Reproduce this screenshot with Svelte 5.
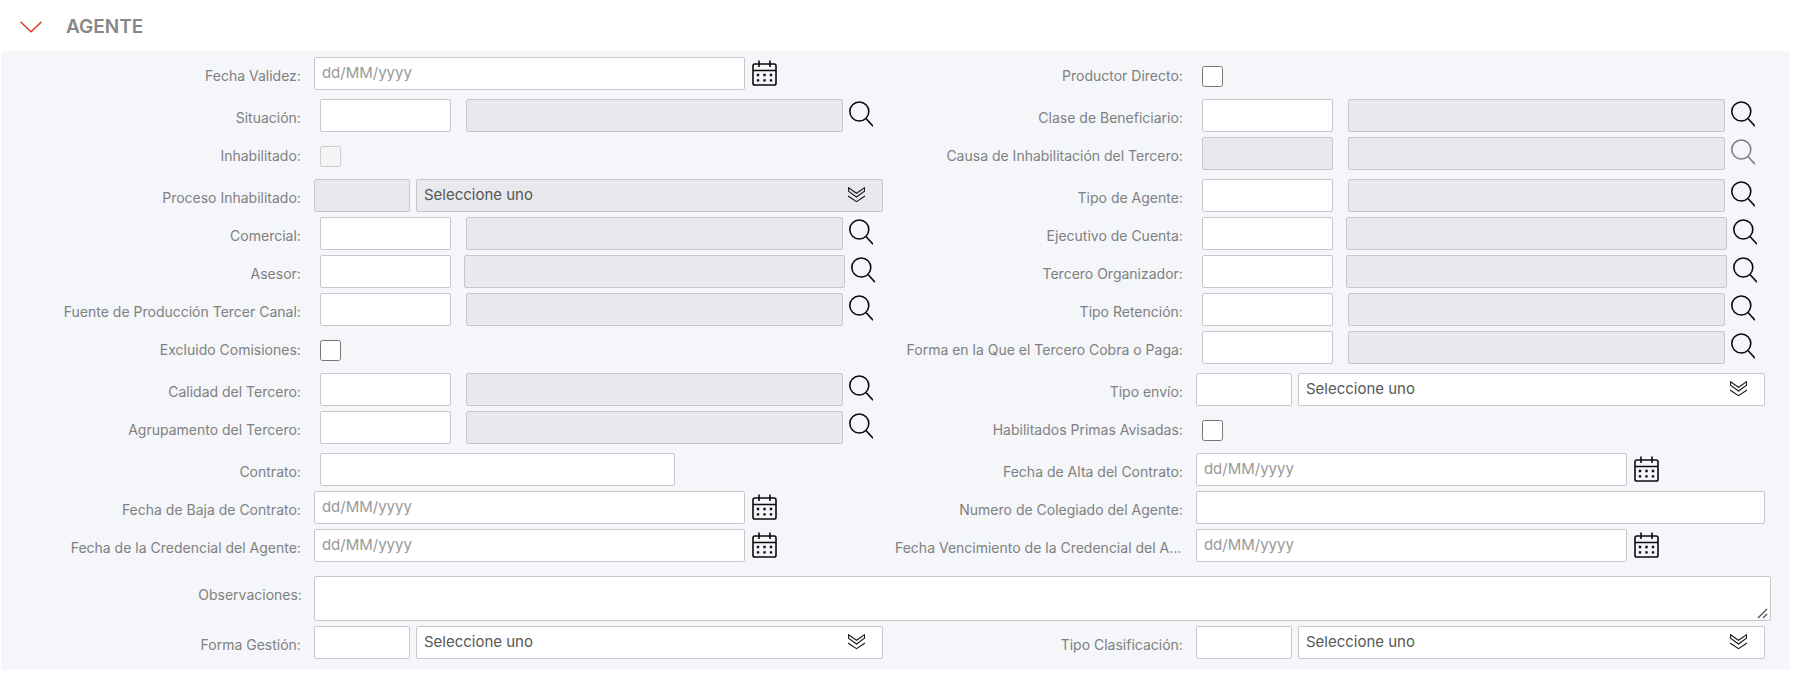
<script>
  const rows = [
    { left: { label: 'Fecha Validez:', kind: 'date' }, right: { label: 'Productor Directo:', kind: 'check' } },
    { spaced: true, left: { label: 'Situación:', kind: 'lookup' }, right: { label: 'Clase de Beneficiario:', kind: 'lookup' } },
    { left: { label: 'Inhabilitado:', kind: 'check', disabled: true }, right: { label: 'Causa de Inhabilitación del Tercero:', kind: 'lookup', disabled: true } },
    { spaced: true, left: { label: 'Proceso Inhabilitado:', kind: 'select', disabled: true }, right: { label: 'Tipo de Agente:', kind: 'lookup' } },
    { left: { label: 'Comercial:', kind: 'lookup' }, right: { label: 'Ejecutivo de Cuenta:', kind: 'lookup', wide: true } },
    { left: { label: 'Asesor:', kind: 'lookup', wide: true }, right: { label: 'Tercero Organizador:', kind: 'lookup', wide: true } },
    { left: { label: 'Fuente de Producción Tercer Canal:', kind: 'lookup' }, right: { label: 'Tipo Retención:', kind: 'lookup' } },
    { left: { label: 'Excluido Comisiones:', kind: 'check' }, right: { label: 'Forma en la Que el Tercero Cobra o Paga:', kind: 'lookup' } },
    { spaced: true, left: { label: 'Calidad del Tercero:', kind: 'lookup' }, right: { label: 'Tipo envío:', kind: 'select' } },
    { left: { label: 'Agrupamento del Tercero:', kind: 'lookup' }, right: { label: 'Habilitados Primas Avisadas:', kind: 'check' } },
    { spaced: true, left: { label: 'Contrato:', kind: 'short' }, right: { label: 'Fecha de Alta del Contrato:', kind: 'date' } },
    { left: { label: 'Fecha de Baja de Contrato:', kind: 'date' }, right: { label: 'Numero de Colegiado del Agente:', kind: 'text' } },
    { left: { label: 'Fecha de la Credencial del Agente:', kind: 'date' }, right: { label: 'Fecha Vencimiento de la Credencial del Agente:', kind: 'date' } }
  ];
  const lastRow = { left: { label: 'Forma Gestión:', kind: 'select' }, right: { label: 'Tipo Clasificación:', kind: 'select' } };

  let open = $state(true);
</script>

{#snippet field(f, id)}
  <div class="field">
    <label for={id}>{f.label}</label>
    {#if f.kind === 'date'}
      <div class="date">
        <input {id} type="text" placeholder="dd/MM/yyyy" />
        <button type="button" class="icon" aria-label="Abrir calendario">
          <svg width="25" height="26" viewBox="0 0 25 26" fill="none" stroke="#0a0a0a" stroke-width="1.6">
            <rect x="1" y="4" width="23" height="21" rx="1.8" />
            <path d="M1 10.5H24M7 0.5V7M18 0.5V7" />
            <path d="M4.8 15h2.4M11.3 15h2.4M17.8 15h2.4M4.8 20.4h2.4M11.3 20.4h2.4M17.8 20.4h2.4" stroke-width="2.4" />
          </svg>
        </button>
      </div>
    {:else if f.kind === 'check'}
      <div class="check"><input {id} type="checkbox" disabled={f.disabled} /></div>
    {:else if f.kind === 'lookup'}
      <div class="lookup" class:wide={f.wide}>
        <input {id} type="text" disabled={f.disabled} />
        <input class="description" type="text" disabled aria-label="Descripción" />
        <button type="button" class="icon" disabled={f.disabled} aria-label="Buscar">
          <svg width="24" height="26" viewBox="0 0 24 26" fill="none" stroke="#0a0a0a" stroke-width="1.6">
            <circle cx="10.3" cy="10.5" r="9.5" />
            <path d="M17 17.5L24 25.2" />
          </svg>
        </button>
      </div>
    {:else if f.kind === 'select'}
      <div class="coded">
        <input type="text" disabled={f.disabled} aria-label="Código" />
        <div class="select">
          <select {id} disabled={f.disabled}><option>Seleccione uno</option></select>
          <svg width="17" height="16" viewBox="0 0 17 16" fill="none" stroke="#1a1a1a" stroke-width="1.1">
            <path d="M0.5 0.8L8.5 6.3L16.5 0.8V4.2L8.5 10L0.5 4.2ZM0 9L8.5 14.7L17 9" />
          </svg>
        </div>
      </div>
    {:else if f.kind === 'short'}
      <div class="short"><input {id} type="text" /></div>
    {:else}
      <div><input {id} type="text" /></div>
    {/if}
  </div>
{/snippet}

<section>
  <header>
    <button type="button" class="toggle" aria-label="Mostrar u ocultar" aria-expanded={open} onclick={() => (open = !open)}>
      <svg width="22" height="12" viewBox="0 0 22 12" fill="none" stroke="#e1301e" stroke-width="1.4">
        <path d="M0.5 0.8L11 10.8L21.5 0.8" />
      </svg>
    </button>
    <h2>AGENTE</h2>
  </header>

  {#if open}
    <form>
      {#each rows as row, i}
        <div class="row" class:spaced={row.spaced}>
          {@render field(row.left, `l${i}`)}
          {@render field(row.right, `r${i}`)}
        </div>
      {/each}
      <div class="notes">
        <label for="notes">Observaciones:</label>
        <textarea id="notes"></textarea>
      </div>
      <div class="row">
        {@render field(lastRow.left, 'gestion')}
        {@render field(lastRow.right, 'clasificacion')}
      </div>
    </form>
  {/if}
</section>

<style>
  :global(body) {
    margin: 0;
    background: #fff;
  }
  section {
    font-family: Inter, 'Liberation Sans', sans-serif;
    color: #808080;
    padding: 0 9px 8px 1px;
  }
  header {
    display: flex;
    align-items: center;
    gap: 24px;
    height: 51px;
    padding: 3px 0 0 19px;
    box-sizing: border-box;
  }
  h2 {
    margin: 0;
    font-size: 19px;
    line-height: 24px;
    font-weight: 600;
    color: #878787;
  }
  button {
    border: 0;
    padding: 0;
    background: none;
    cursor: pointer;
  }
  svg {
    display: block;
  }
  form {
    display: flex;
    flex-direction: column;
    gap: 5px;
    padding: 6px 25px 11px 0;
    background: #f4f6fa;
    border-radius: 3px;
  }
  .row {
    display: grid;
    grid-template-columns: 1fr 1fr;
  }
  .spaced {
    margin-top: 4px;
  }
  .field {
    display: grid;
    grid-template-columns: 34% minmax(0, 1fr);
    column-gap: 13px;
    height: 33px;
  }
  .notes {
    display: grid;
    grid-template-columns: 17% minmax(0, 1fr);
    column-gap: 12px;
    margin: 9px -6px 0 0;
  }
  label {
    padding: 9px 0 0 12px;
    font-size: 14px;
    line-height: 20px;
    text-align: right;
    white-space: nowrap;
    overflow: hidden;
    text-overflow: ellipsis;
  }
  input,
  select,
  textarea {
    font-family: inherit;
    font-size: 15px;
    color: #575757;
    box-sizing: border-box;
    margin: 0;
  }
  input[type='text'],
  select,
  textarea {
    width: 100%;
    min-width: 0;
    height: 33px;
    padding: 0 7px 3px;
    border: 1px solid #c5c8cd;
    border-radius: 2px;
    background: #fff;
    opacity: 1;
  }
  input[type='text']:disabled,
  select:disabled {
    background: #e8e9ed;
  }
  input::placeholder {
    color: #999;
    opacity: 1;
  }
  select {
    appearance: none;
  }
  textarea {
    display: block;
    height: 45px;
    resize: both;
  }
  textarea::-webkit-resizer {
    background: url("data:image/svg+xml,%3Csvg xmlns='http://www.w3.org/2000/svg' width='15' height='15' fill='none' stroke='%23555' stroke-width='1.4'%3E%3Cpath d='M3 13L12 4M8 13L12 9'/%3E%3C/svg%3E") no-repeat right bottom;
  }
  .date {
    display: grid;
    grid-template-columns: 25fr 8fr;
  }
  .icon {
    justify-self: start;
    align-self: start;
    padding-top: 2px;
  }
  .date .icon {
    padding: 3px 0 0 7px;
  }
  .icon:disabled {
    opacity: 0.5;
  }
  .check {
    padding: 9px 0 0 6px;
  }
  input[type='checkbox'] {
    display: block;
    width: 21px;
    height: 21px;
  }
  .lookup {
    display: grid;
    grid-template-columns: 131fr 398fr 24px;
    padding: 0 10px 0 6px;
  }
  .lookup .description {
    width: auto;
    margin: 0 6px 0 15px;
  }
  .lookup.wide {
    padding-right: 8px;
  }
  .lookup.wide .description {
    margin-left: 13px;
  }
  .coded {
    display: grid;
    grid-template-columns: 96fr 467fr;
    column-gap: 6px;
  }
  .select {
    display: grid;
  }
  .select > * {
    grid-area: 1 / 1;
  }
  .select svg {
    justify-self: end;
    margin: 8px 18px 0 0;
    pointer-events: none;
  }
  .short {
    padding-left: 6px;
  }
  .short input {
    width: 63%;
  }
</style>
